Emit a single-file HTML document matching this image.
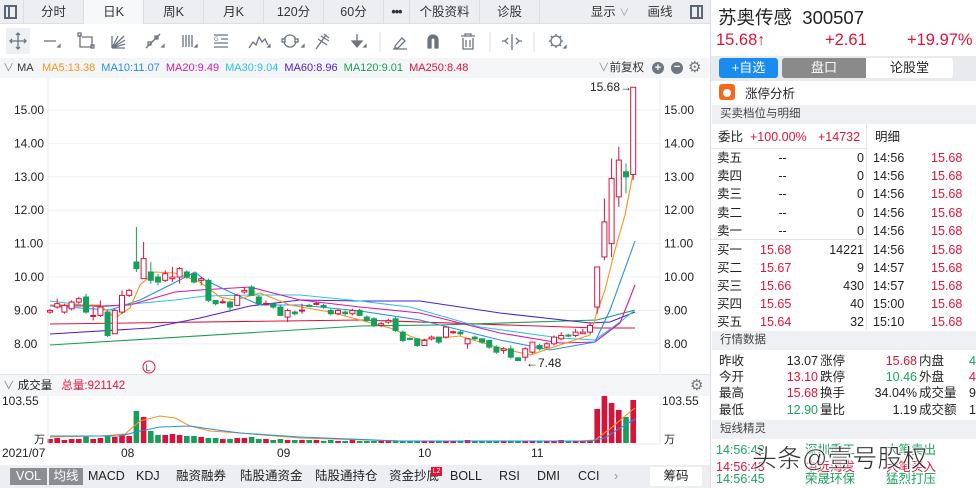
<!DOCTYPE html>
<html><head><meta charset="utf-8">
<style>
*{margin:0;padding:0;box-sizing:border-box}
html,body{width:976px;height:488px;overflow:hidden}
body{background:#fff;font-family:"Liberation Sans","Noto Sans CJK SC",sans-serif;color:#222;position:relative}
.abs{position:absolute;white-space:nowrap}
.tabs{position:absolute;left:0;top:0;width:710px;height:24px;background:#eceef1;border-bottom:1px solid #dcdfe4}
.tab{position:absolute;top:0;height:24px;line-height:24px;font-size:12.5px;color:#333;text-align:center;border-right:1px solid #dadde2}
.red{color:#e0133a}.grn{color:#1aa45a}
.sec{position:absolute;left:712px;width:264px;height:19px;background:#eef0f3;font-size:11.5px;color:#444;line-height:19px;padding-left:8px}
.row{position:absolute;font-size:12.5px;height:18px;line-height:18px}
</style></head><body>

<div class="tabs">
 <div class="tab" style="left:0;width:24px"><div style="position:absolute;left:4px;top:5px;width:13px;height:14px;border:2px solid #5b6675"><div style="position:absolute;left:2px;top:0;width:2px;height:10px;background:#5b6675"></div></div></div>
 <div class="tab" style="left:24px;width:60px">分时</div>
 <div class="tab" style="left:84px;width:60px;background:#f7f8fa">日K</div>
 <div class="tab" style="left:144px;width:60px">周K</div>
 <div class="tab" style="left:204px;width:60px">月K</div>
 <div class="tab" style="left:264px;width:60px">120分</div>
 <div class="tab" style="left:324px;width:60px">60分</div>
 <div class="tab" style="left:384px;width:26px;font-weight:bold;letter-spacing:-1px">•••</div>
 <div class="tab" style="left:410px;width:70px">个股资料</div>
 <div class="tab" style="left:480px;width:60px">诊股</div>
 <div class="tab" style="left:580px;width:60px;border:none">显示 <span style="color:#999;font-size:10px">∨</span></div>
 <div class="tab" style="left:640px;width:40px;border:none">画线</div>
 <div class="tab" style="left:686px;width:24px;border:none"><div style="position:absolute;left:4px;top:5px;width:13px;height:14px;border:2px solid #5b6675"><div style="position:absolute;right:2px;top:0;width:2px;height:10px;background:#5b6675"></div></div></div>
</div>

<svg class="abs" style="left:0;top:24px" width="710" height="34" viewBox="0 0 710 34" fill="none" stroke="#6b7480" stroke-width="1.3">
 <rect x="6" y="4" width="24" height="26" fill="#eef0f4" stroke="none"/>
 <path d="M18 9v16M10 17h16M16 11l2-2 2 2M16 23l2 2 2-2M12 15l-2 2 2 2M24 15l2 2-2 2"/>
 <path d="M44 17h12"/><path d="M60 21l-2 2h2z" fill="#6b7480"/>
 <path d="M80 11v12h12M82 13h10v10" /><rect x="78" y="9" width="3" height="3"/><rect x="91" y="21" width="3" height="3"/>
 <path d="M112 24l12-12M112 24l13-8M112 24l13-4M112 24h13M112 24v-12M112 24l6-12"/>
 <path d="M146 24l14-14"/><rect x="148" y="18" width="3" height="3"/><rect x="155" y="12" width="3" height="3"/><path d="M164 21l-2 2h2z" fill="#6b7480"/>
 <path d="M183 11v12M186 11v12M189 11v12M192 11v12"/><path d="M197 21l-2 2h2z" fill="#6b7480"/>
 <path d="M214 11h14M221 15h7M214 19h14M214 23h14"/><text x="214" y="17" font-size="6" fill="#6b7480" stroke="none">G</text>
 <path d="M249 24l4-6 3 3 3-8 3 5 3-3 3 6"/><path d="M270 21l-2 2h2z" fill="#6b7480"/>
 <circle cx="290" cy="17" r="6"/><rect x="282" y="15" width="3" height="3" fill="#fff"/><rect x="295" y="15" width="3" height="3" fill="#fff"/><path d="M304 21l-2 2h2z" fill="#6b7480"/>
 <path d="M316 25l10-14M318 15l9 6M321 12l8 5M324 10l5 4"/>
 <path d="M357 10v10M352 17l5 6 5-6z" fill="#6b7480"/><path d="M366 21l-2 2h2z" fill="#6b7480"/>
 <line x1="380" y1="8" x2="380" y2="28" stroke="#e3e5e8"/>
 <path d="M395 22l7-8 3 3-7 7h-3zM393 25h14"/>
 <path d="M428 24v-8a5 5 0 0 1 10 0v8h-3v-8a2 2 0 0 0-4 0v8z" fill="#6b7480"/>
 <path d="M461 12h14M465 12v-2h6v2M463 14v11h10v-11M466 16v7M470 16v7"/>
 <line x1="490" y1="8" x2="490" y2="28" stroke="#e3e5e8"/>
 <path d="M512 10v16M505 17l-3 0M508 14l-3 3 3 3M516 14l3 3-3 3M522 17h-3" />
 <line x1="534" y1="8" x2="534" y2="28" stroke="#e3e5e8"/>
 <circle cx="556" cy="17" r="5"/><path d="M556 10v2M556 22v2M549 17h2M561 17h2M551 12l1.5 1.5M561 12l-1.5 1.5M551 22l1.5-1.5M561 22l-1.5-1.5"/><path d="M566 22l-2 2h2z" fill="#6b7480"/>
</svg>

<div class="abs" style="left:0;top:58px;width:710px;height:20px;background:#f4f5f7;font-size:11px;line-height:20px">
 <span style="color:#888;margin-left:3px">∨</span> <span style="color:#333">MA</span>
 <span style="color:#f39419;margin-left:6px">MA5:13.38</span>
 <span style="color:#2a8fe8;margin-left:3px">MA10:11.07</span>
 <span style="color:#d21ba8;margin-left:3px">MA20:9.49</span>
 <span style="color:#2bc4e8;margin-left:3px">MA30:9.04</span>
 <span style="color:#4a1fd8;margin-left:3px">MA60:8.96</span>
 <span style="color:#18a050;margin-left:3px">MA120:9.01</span>
 <span style="color:#e0133a;margin-left:3px">MA250:8.48</span>
 <span class="abs" style="left:598px;top:0;color:#333;font-size:11.5px"><span style="color:#999">∨</span>前复权</span>
 <span class="abs" style="left:652px;top:4px;width:12px;height:12px;border-radius:6px;background:#6f7782;color:#fff;font-size:11px;line-height:12px;text-align:center;font-weight:bold">+</span>
 <span class="abs" style="left:671px;top:4px;width:12px;height:12px;border-radius:6px;background:#6f7782;color:#fff;font-size:11px;line-height:11px;text-align:center;font-weight:bold">−</span>
 <span class="abs" style="left:688px;top:0;color:#6f7782;font-size:15px">⚙</span>
</div>

<svg id="main" class="abs" style="left:0;top:78px" width="710" height="296"></svg>

<div class="abs" style="left:0;top:374px;width:710px;height:22px;background:#f4f5f7;border-top:1px solid #e3e5e8;font-size:11.5px;line-height:22px">
 <span style="color:#888;margin-left:3px">∨</span> 成交量 <span class="red" style="margin-left:6px">总量:921142</span>
 <span class="abs" style="left:690px;top:0;color:#6f7782;font-size:15px">⚙</span>
</div>
<svg id="vol" class="abs" style="left:0;top:396px" width="710" height="66"></svg>

<div class="abs" style="left:0;top:465px;width:710px;height:23px;background:#eceef1;font-size:12.5px;line-height:23px">
 <span class="abs" style="left:10px;top:3px;width:37px;height:17px;background:#8a8d92;color:#fff;line-height:17px;text-align:center">VOL</span>
 <span class="abs" style="left:49px;top:3px;width:34px;height:17px;background:#8a8d92;color:#fff;line-height:17px;text-align:center">均线</span>
 <span class="abs" style="left:88px">MACD</span>
 <span class="abs" style="left:136px">KDJ</span>
 <span class="abs" style="left:176px">融资融券</span>
 <span class="abs" style="left:240px">陆股通资金</span>
 <span class="abs" style="left:315px">陆股通持仓</span>
 <span class="abs" style="left:389px">资金抄底</span>
 <span class="abs" style="left:431px;top:2px;width:11px;height:9px;background:#e0133a;color:#fff;font-size:7px;line-height:9px;text-align:center">L2</span>
 <span class="abs" style="left:450px">BOLL</span>
 <span class="abs" style="left:499px">RSI</span>
 <span class="abs" style="left:537px">DMI</span>
 <span class="abs" style="left:578px">CCI</span>
 <span class="abs" style="left:614px;color:#999">›</span>
 <span class="abs" style="left:650px;top:2px;width:52px;height:19px;background:#fff;line-height:19px;text-align:center">筹码</span>
</div>

<div class="abs" style="left:710px;top:0;width:1px;height:488px;background:#d8dbe0"></div>
<div class="abs" style="left:718px;top:4px;font-size:18.5px;color:#222">苏奥传感&nbsp; 300507</div>
<div class="abs red" style="left:716px;top:31px;font-size:16.5px">15.68<span style="font-size:16px">↑</span></div>
<div class="abs red" style="left:825px;top:31px;font-size:16.5px">+2.61</div>
<div class="abs red" style="left:907px;top:31px;font-size:16.5px">+19.97%</div>
<div class="abs" style="left:711px;top:56px;width:265px;height:25px;background:#e8eaee"></div>
<div class="abs" style="left:719px;top:58px;width:59px;height:20px;background:#1a8cf0;border-radius:3px;color:#fff;font-size:13px;text-align:center;line-height:20px">+自选</div>
<div class="abs" style="left:782px;top:58px;width:84px;height:20px;background:#8a8a8a;border-radius:3px 0 0 3px;color:#fff;font-size:13px;text-align:center;line-height:20px">盘口</div>
<div class="abs" style="left:866px;top:58px;width:87px;height:20px;background:#fff;border-radius:0 3px 3px 0;color:#222;font-size:13px;text-align:center;line-height:20px">论股堂</div>
<div class="abs" style="left:719px;top:84px;width:16px;height:16px;background:#f56a1a;border-radius:3px"><div style="position:absolute;left:4px;top:5px;width:8px;height:8px;border-radius:4px;background:#fff"></div></div>
<div class="abs" style="left:745px;top:83px;font-size:12.5px">涨停分析</div>
<div class="sec" style="top:105px">买卖档位与明细</div>
<div class="abs" style="left:866px;top:124px;width:1px;height:206px;background:#e3e5e8"></div>
<div class="abs" style="left:711px;top:148px;width:155px;height:1px;background:#e3e5e8"></div>
<div class="abs" style="left:711px;top:239px;width:155px;height:1px;background:#e3e5e8"></div>
<div class="row" style="left:718px;top:128px">委比</div>
<div class="row red" style="left:750px;top:128px">+100.00%</div>
<div class="row red" style="left:818px;top:128px">+14732</div>
<div class="row" style="left:875px;top:128px">明细</div>
<div id="book"></div>
<div class="sec" style="top:331px">行情数据</div>
<div id="data"></div>
<div class="sec" style="top:420px">短线精灵</div>
<div class="row grn" style="left:716px;top:441px">14:56:42</div>
<div class="row red" style="left:716px;top:458px">14:56:43</div>
<div class="row grn" style="left:716px;top:470px">14:56:45</div>
<div class="row grn" style="left:805px;top:441px">深圳重工</div>
<div class="row grn" style="left:886px;top:441px">大笔卖出</div>
<div class="row red" style="left:805px;top:458px">中远海发</div>
<div class="row red" style="left:886px;top:458px">大笔买入</div>
<div class="row grn" style="left:805px;top:470px">荣晟环保</div>
<div class="row grn" style="left:886px;top:470px">猛烈打压</div>
<div class="abs" style="left:752px;top:444px;font-size:25px;line-height:30px;color:#333;-webkit-text-stroke:0.5px #fff;text-shadow:0 0 2px #fff,0 0 2px #fff">头条@壹号股权</div>

<script>
function y(p){return 110+(15-p)*33.4-78;}
var C=[[8.95,9.0,9.05,8.9],[9.1,9.2,9.35,9.05],[8.95,9.15,9.2,8.9],[9.05,9.25,9.3,9.0],[9.25,9.35,9.4,9.2],[9.4,8.95,9.5,8.9],[8.85,8.85,9.1,8.7],[8.85,9.1,9.3,8.8],[8.95,8.25,9.0,8.2],[8.3,9.0,9.05,8.3],[8.95,9.45,9.6,8.9],[9.45,9.6,9.65,9.4],[10.45,10.25,11.5,10.15],[9.95,10.55,11.05,9.95],[10.15,9.9,10.45,9.8],[10.0,9.85,10.1,9.75],[9.9,10.1,10.2,9.85],[9.95,10.0,10.3,9.85],[10.0,10.25,10.3,9.8],[10.15,10.0,10.2,9.95],[10.1,9.85,10.15,9.8],[9.9,9.95,10.0,9.75],[9.9,9.3,9.95,9.25],[9.3,9.2,9.3,9.15],[9.25,9.26,9.35,9.2],[9.25,9.1,9.3,8.95],[9.15,9.45,9.5,9.15],[9.55,9.6,9.7,9.5],[9.7,9.45,9.75,9.45],[9.4,9.2,9.45,9.15],[9.2,9.21,9.3,9.15],[9.2,9.1,9.2,9.05],[9.1,8.85,9.15,8.85],[8.8,9.0,9.05,8.65],[8.95,8.9,9.0,8.85],[9.0,9.01,9.2,8.9],[9.15,9.13,9.2,9.1],[9.2,9.21,9.25,9.15],[9.15,9.1,9.2,9.05],[9.0,8.9,9.05,8.85],[8.9,9.0,9.05,8.85],[8.95,8.9,9.0,8.85],[8.9,9.0,9.05,8.85],[9.0,8.85,9.05,8.85],[8.8,8.7,8.85,8.65],[8.75,8.55,8.8,8.5],[8.55,8.6,8.65,8.5],[8.65,8.7,8.75,8.6],[8.75,8.4,8.8,8.35],[8.35,8.1,8.4,8.05],[8.16,8.14,8.2,8.1],[8.15,7.95,8.15,7.9],[7.95,8.1,8.15,7.95],[8.15,8.2,8.25,8.1],[8.2,8.05,8.2,8.0],[8.2,8.5,8.5,8.15],[8.35,8.36,8.4,8.3],[8.35,8.3,8.4,8.25],[8.0,8.15,8.15,7.85],[8.2,8.15,8.25,8.1],[8.15,8.05,8.15,8.0],[8.1,7.9,8.1,7.85],[7.9,7.75,7.95,7.7],[7.8,7.85,7.9,7.7],[7.85,7.6,7.95,7.55],[7.58,7.5,7.6,7.48],[7.6,7.85,7.9,7.48],[7.75,8.05,8.05,7.7],[7.95,7.85,8.0,7.8],[7.9,8.0,8.05,7.85],[8.0,8.2,8.25,7.95],[8.15,8.25,8.35,8.1],[8.26,8.24,8.3,8.2],[8.25,8.35,8.45,8.2],[8.3,8.35,8.45,8.3],[8.35,8.55,8.65,8.3],[9.1,10.3,10.3,8.9],[10.6,11.65,12.35,10.5],[11.0,12.95,13.55,10.6],[12.4,13.5,13.9,12.1],[13.15,13.0,13.4,12.5],[13.07,15.68,15.68,12.9]];
var R="#d9123a",G="#14a05a",s="";
[15,14,13,12,11,10,9,8].forEach(function(p){var yy=y(p);s+='<line x1="48" x2="660" y1="'+yy+'" y2="'+yy+'" stroke="#eef0f2"/><text x="14" y="'+(yy+4)+'" font-size="12" fill="#222">'+p.toFixed(2)+'</text><text x="664" y="'+(yy+4)+'" font-size="12" fill="#222">'+p.toFixed(2)+'</text>';});
s+='<line x1="48" x2="48" y1="0" y2="296" stroke="#e8eaed"/><line x1="660" x2="660" y1="0" y2="296" stroke="#e8eaed"/>';
function pl(pts,c){var d=pts.map(function(p){return p[0]+','+(p[1]-78)}).join(' ');return '<polyline points="'+d+'" fill="none" stroke="'+c+'" stroke-width="1.1"/>';}
function pv(pts,c){var d=pts.map(function(p){return p[0]+','+p[1]}).join(' ');return '<polyline points="'+d+'" fill="none" stroke="'+c+'" stroke-width="1.1"/>';}
s+=pl([[50,324],[360,320],[597,328],[635,328]],"#e0133a");
s+=pl([[50,345],[360,326],[440,325],[597,320],[635,310]],"#18a050");
s+=pl([[50,334],[150,328],[200,318],[250,306],[300,300],[360,301],[420,301],[500,313],[590,323],[610,322],[635,312]],"#4a1fd8");
s+=pl([[50,301],[100,307],[175,300],[205,296],[250,295],[300,295],[360,301],[410,307],[480,327],[560,338],[595,340],[620,322],[635,310]],"#2bc4e8");
s+=pl([[50,306],[100,306],[130,305],[175,292],[200,290],[250,287],[300,300],[360,307],[420,313],[500,333],[560,343],[595,342],[620,323],[635,285]],"#d21ba8");
s+=pl([[50,306],[110,310],[140,300],[170,285],[195,272],[205,280],[230,292],[260,305],[300,305],[360,311],[420,320],[500,340],[550,350],[595,342],[610,310],[635,241]],"#2a8fe8");
s+=pl([[50,305],[100,305],[115,318],[130,308],[140,285],[155,272],[175,273],[200,282],[220,297],[235,300],[260,293],[290,305],[330,312],[390,328],[420,340],[460,336],[500,348],[530,355],[560,345],[590,335],[597,312],[605,290],[615,250],[625,215],[635,163]],"#f39419");
C.forEach(function(c,i){var x=50+i*7.2,up=c[1]>=c[0],col=up?R:G,t=y(Math.max(c[0],c[1])),b=y(Math.min(c[0],c[1])),h=Math.max(b-t,1);
 s+='<line x1="'+x+'" x2="'+x+'" y1="'+y(c[2])+'" y2="'+y(c[3])+'" stroke="'+col+'"/>';
 s+='<rect x="'+(x-2.5)+'" y="'+t+'" width="5" height="'+h+'" fill="'+(up?'#fff':col)+'" stroke="'+col+'"/>';});
s+='<text x="590" y="13" font-size="12" fill="#222">15.68→</text><text x="526" y="289" font-size="12" fill="#222">←7.48</text>';
s+='<circle cx="149" cy="289" r="6" fill="none" stroke="#e0133a"/><text x="145.5" y="293" font-size="9" fill="#e0133a">L</text>';
document.getElementById('main').innerHTML=s;
var V=[4,5,3,4,4,7,4,5,8,6,9,7,32,26,12,8,8,9,8,7,7,6,5,5,4,4,5,5,6,4,4,3,4,3,3,3,3,3,2,3,2,2,3,2,2,2,2,2,2,2,2,2,2,2,2,2,2,2,3,2,2,2,2,2,2,2,2,2,2,2,2,3,2,2,2,3,34,47,40,33,26,43];
var v="",B=47;
V.forEach(function(h,i){var x=50+i*7.2,c=C[i],col=c[1]>=c[0]?R:G;v+='<rect x="'+(x-2.8)+'" y="'+(B-h)+'" width="5.6" height="'+h+'" fill="'+col+'"/>';});
v+=pv([[50,41],[100,40],[125,38],[140,25],[160,20],[175,22],[190,30],[210,35],[240,37],[300,42],[400,45],[580,45],[595,44],[610,33],[625,20],[635,12]],"#f39419");
v+=pv([[50,40],[120,40],[140,35],[160,31],[190,30],[210,33],[240,37],[300,41],[400,45],[590,45],[605,42],[620,32],[635,23]],"#2a8fe8");
v+='<line x1="48" x2="48" y1="0" y2="48" stroke="#e8eaed"/><line x1="660" x2="660" y1="0" y2="48" stroke="#e8eaed"/><line x1="48" x2="660" y1="48" y2="48" stroke="#e8eaed"/>';
v+='<text x="2" y="9" font-size="12" fill="#222">103.55</text><text x="662" y="9" font-size="12" fill="#222">103.55</text><text x="34" y="47" font-size="11" fill="#222">万</text><text x="664" y="47" font-size="11" fill="#222">万</text>';
v+='<text x="2" y="61" font-size="12" fill="#222">2021/07</text><text x="121" y="61" font-size="12" fill="#222">08</text><text x="277" y="61" font-size="12" fill="#222">09</text><text x="418" y="61" font-size="12" fill="#222">10</text><text x="531" y="61" font-size="12" fill="#222">11</text>';
document.getElementById('vol').innerHTML=v;
var bk=[["卖五","--","0","14:56"],["卖四","--","0","14:56"],["卖三","--","0","14:56"],["卖二","--","0","14:56"],["卖一","--","0","14:56"],["买一","15.68","14221","14:56"],["买二","15.67","9","14:57"],["买三","15.66","430","14:57"],["买四","15.65","40","15:00"],["买五","15.64","32","15:10"]];
var tops=[149,167,185,204,222,241,259,277,295,313],h="";
bk.forEach(function(r,i){var t=tops[i];h+='<div class="row" style="left:717px;top:'+t+'px">'+r[0]+'</div><div class="row '+(r[1]=="--"?'':'red')+'" style="left:760px;width:45px;text-align:'+(r[1]=="--"?'center':'left')+';top:'+t+'px">'+r[1]+'</div><div class="row" style="left:820px;width:44px;text-align:right;top:'+t+'px">'+r[2]+'</div><div class="row" style="left:873px;top:'+t+'px">'+r[3]+'</div><div class="row red" style="left:931px;top:'+t+'px">15.68</div>';});
document.getElementById('book').innerHTML=h;
var D=[["昨收","13.07","","涨停","15.68","red","内盘","4","grn"],["今开","13.10","red","跌停","10.46","grn","外盘","4","red"],["最高","15.68","red","换手","34.04%","","成交量","9",""],["最低","12.90","grn","量比","1.19","","成交额","1",""]];
var dt=[352,368,384,401],g="";
D.forEach(function(r,i){var t=dt[i];g+='<div class="row" style="left:719px;top:'+t+'px">'+r[0]+'</div><div class="row '+r[2]+'" style="left:760px;width:58px;text-align:right;top:'+t+'px">'+r[1]+'</div><div class="row" style="left:820px;top:'+t+'px">'+r[3]+'</div><div class="row '+r[5]+'" style="left:860px;width:57px;text-align:right;top:'+t+'px">'+r[4]+'</div><div class="row" style="left:919px;top:'+t+'px">'+r[6]+'</div><div class="row '+r[8]+'" style="left:969px;top:'+t+'px">'+r[7]+'</div>';});
document.getElementById('data').innerHTML=g;
</script>
</body></html>
